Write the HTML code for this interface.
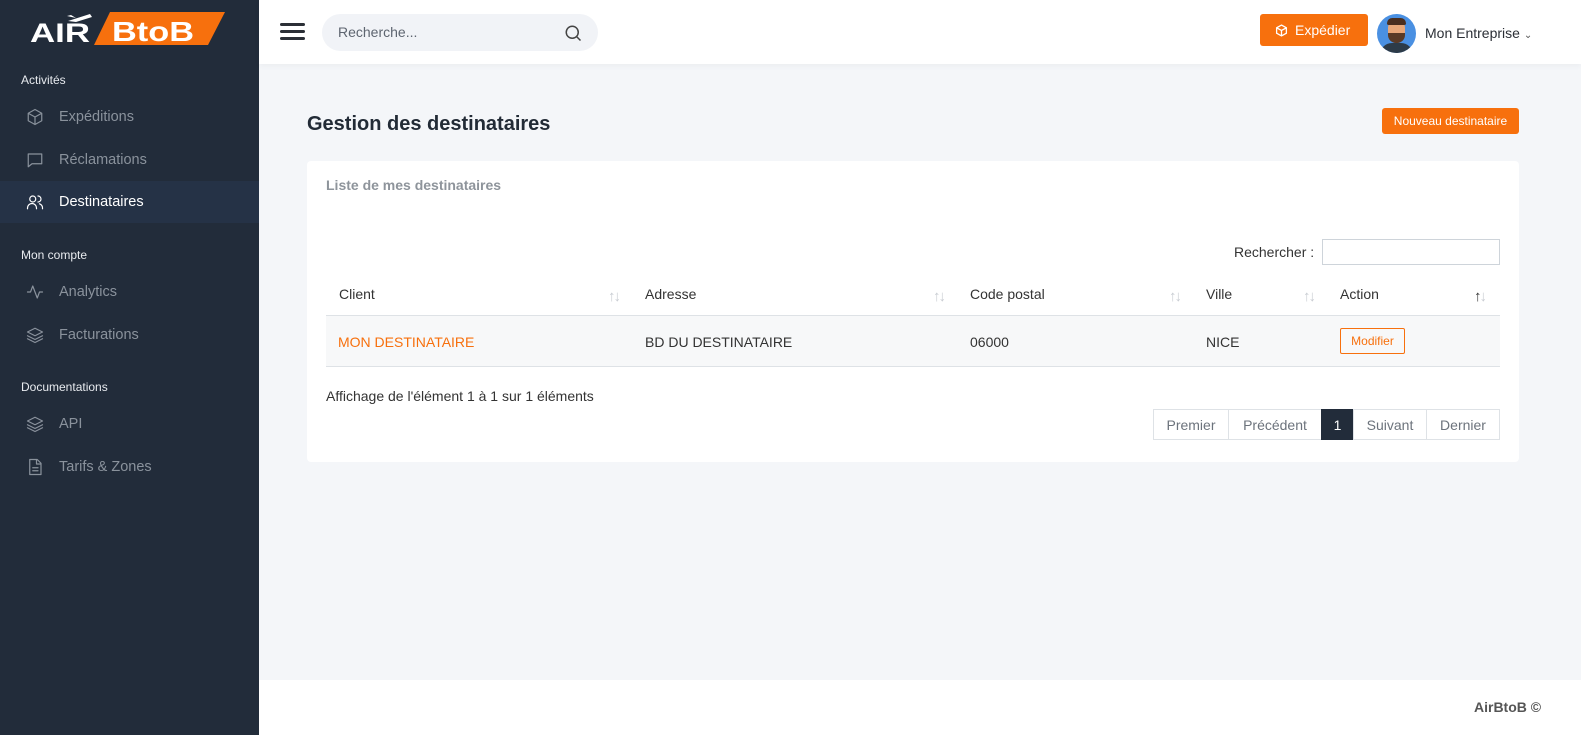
<!DOCTYPE html>
<html><head><meta charset="utf-8"><style>
*{box-sizing:border-box;margin:0;padding:0}
body{width:1581px;height:735px;overflow:hidden;font-family:"Liberation Sans",sans-serif;background:#f4f6f9;position:relative;color:#2b2f36}
.sb{position:absolute;left:0;top:0;width:259px;height:735px;background:#222c3a}
.sec{position:absolute;left:21px;font-size:12px;color:#e8ebef}
.it{position:absolute;left:0;width:259px;height:42px;display:flex;align-items:center;padding-left:26px;font-size:14.5px;color:#8a929c}
.it svg{width:18px;height:18px;margin-right:15px;stroke:#8a929c;fill:none;stroke-width:1.6;stroke-linecap:round;stroke-linejoin:round}
.it.act{background:#253246;color:#fff}
.it.act svg{stroke:#fff}
.hd{position:absolute;left:259px;top:0;right:0;height:64px;background:#fff;box-shadow:0 2px 6px rgba(0,0,0,.04)}
.srch{position:absolute;left:63px;top:14px;width:276px;height:37px;border-radius:19px;background:#f1f3f7;font-size:14px;color:#5e6570;padding:10px 16px}
.btn{background:#f7700d;color:#fff;border-radius:3px}
.card{position:absolute;left:307px;top:161px;width:1212px;height:301px;background:#fff;border-radius:4px}
.arr{position:absolute;font-size:15px;color:#c8ccd2;letter-spacing:-2px}
.pg{position:absolute;top:409px;height:31px;border:1px solid #dee2e6;font-size:14px;color:#6c737c;display:flex;align-items:center;justify-content:center}
</style></head><body>
<div class="sb">
 <svg style="position:absolute;left:28px;top:8px" width="200" height="40" viewBox="0 0 200 40">
   <path d="M40 13 L62 6 L64 9 L48 14 Z M48 10 L43 7 L39 8 Z" fill="#fff"/>
   <text x="2" y="34" font-family="Liberation Sans" font-weight="bold" font-size="27" fill="#fff" textLength="60" lengthAdjust="spacingAndGlyphs">AIR</text>
   <path d="M82 4 H197 L180 37 H66 Z" fill="#f7700d"/>
   <text x="84" y="33" font-family="Liberation Sans" font-weight="bold" font-size="28" fill="#fff" textLength="82" lengthAdjust="spacingAndGlyphs">BtoB</text>
 </svg>
 <div class="sec" style="top:73px">Activités</div>
 <div class="it" style="top:96px"><svg viewBox="0 0 24 24"><path d="M12 2l9 5v10l-9 5-9-5V7z M3 7l9 5 9-5 M12 12v10"/></svg>Expéditions</div>
 <div class="it" style="top:139px"><svg viewBox="0 0 24 24"><path d="M3 4h18v13H8l-5 4z"/></svg>Réclamations</div>
 <div class="it act" style="top:181px"><svg viewBox="0 0 24 24"><circle cx="9" cy="8" r="4"/><path d="M2 21v-1a6 6 0 0 1 12 0v1 M16 4a4 4 0 0 1 0 8 M22 21v-1a6 6 0 0 0-4-5.6"/></svg>Destinataires</div>
 <div class="sec" style="top:248px">Mon compte</div>
 <div class="it" style="top:271px"><svg viewBox="0 0 24 24"><path d="M2 12h4l3-8 6 16 3-8h4"/></svg>Analytics</div>
 <div class="it" style="top:314px"><svg viewBox="0 0 24 24"><path d="M12 3l10 5-10 5L2 8z M2 13l10 5 10-5 M2 17l10 5 10-5"/></svg>Facturations</div>
 <div class="sec" style="top:380px">Documentations</div>
 <div class="it" style="top:403px"><svg viewBox="0 0 24 24"><path d="M12 3l10 5-10 5L2 8z M2 13l10 5 10-5 M2 17l10 5 10-5"/></svg>API</div>
 <div class="it" style="top:446px"><svg viewBox="0 0 24 24"><path d="M5 2h10l5 5v15H5z M14 2v6h6 M9 13h7 M9 17h7"/></svg>Tarifs &amp; Zones</div>
</div>
<div class="hd">
 <div style="position:absolute;left:21px;top:23px;width:25px;height:3px;background:#2b2f36;border-radius:2px;box-shadow:0 7px 0 #2b2f36,0 14px 0 #2b2f36"></div>
 <div class="srch">Recherche...
  <svg style="position:absolute;right:16px;top:10px" width="18" height="18" viewBox="0 0 24 24" fill="none" stroke="#444" stroke-width="2"><circle cx="11" cy="11" r="8"/><path d="M17 17l5 5"/></svg></div>
 <div class="btn" style="position:absolute;left:1001px;top:14px;width:108px;height:32px;font-size:14px;padding:8px 0 0 35px">
  <svg style="position:absolute;left:15px;top:10px" width="13" height="13" viewBox="0 0 24 24" fill="none" stroke="#fff" stroke-width="2.4"><path d="M12 2l9 5v10l-9 5-9-5V7z M3 7l9 5 9-5 M12 12v10"/></svg>Expédier</div>
 <div style="position:absolute;left:1118px;top:14px;width:39px;height:39px;border-radius:50%;background:#4a90e2;overflow:hidden">
  <div style="position:absolute;left:11px;top:6px;width:17px;height:22px;background:#e9a87a;border-radius:8px"></div>
  <div style="position:absolute;left:10px;top:4px;width:19px;height:7px;background:#4a2e1f;border-radius:6px 6px 2px 2px"></div>
  <div style="position:absolute;left:11px;top:19px;width:17px;height:10px;background:#5a3a26;border-radius:0 0 8px 8px"></div>
  <div style="position:absolute;left:3px;top:29px;width:33px;height:14px;background:#2d3b48;border-radius:12px 12px 0 0"></div>
 </div>
 <div style="position:absolute;left:1166px;top:25px;font-size:14px;color:#2b2f36">Mon Entreprise <span style="font-size:10px;color:#555">&#8964;</span></div>
</div>
<div style="position:absolute;left:307px;top:113px;font-size:20px;font-weight:bold;color:#222b36">Gestion des destinataires</div>
<div class="btn" style="position:absolute;left:1382px;top:108px;width:137px;height:26px;font-size:12px;text-align:center;line-height:26px">Nouveau destinataire</div>
<div class="card">
 <div style="position:absolute;left:19px;top:16px;font-size:14px;font-weight:bold;color:#8e949b">Liste de mes destinataires</div>
 <div style="position:absolute;left:927px;top:83px;font-size:14px;color:#333">Rechercher :</div>
 <div style="position:absolute;left:1015px;top:78px;width:178px;height:26px;border:1px solid #ced4da"></div>
 <div style="position:absolute;left:19px;top:154px;width:1174px;height:1px;background:#dee2e6"></div>
 <div style="position:absolute;left:19px;top:155px;width:1174px;height:51px;background:#f7f8f9;border-bottom:1px solid #dee2e6"></div>
 <div style="position:absolute;top:125px;left:32px;font-size:14px;color:#333">Client</div>
 <div style="position:absolute;top:125px;left:338px;font-size:14px;color:#333">Adresse</div>
 <div style="position:absolute;top:125px;left:663px;font-size:14px;color:#333">Code postal</div>
 <div style="position:absolute;top:125px;left:899px;font-size:14px;color:#333">Ville</div>
 <div style="position:absolute;top:125px;left:1033px;font-size:14px;color:#333">Action</div>
 <div class="arr" style="left:301px;top:127px">↑↓</div>
 <div class="arr" style="left:626px;top:127px">↑↓</div>
 <div class="arr" style="left:862px;top:127px">↑↓</div>
 <div class="arr" style="left:996px;top:127px">↑↓</div>
 <div class="arr" style="left:1167px;top:127px"><span style="color:#333">↑</span>↓</div>
 <div style="position:absolute;top:173px;left:31px;font-size:14px;color:#f7700d">MON DESTINATAIRE</div>
 <div style="position:absolute;top:173px;left:338px;font-size:14px;color:#333">BD DU DESTINATAIRE</div>
 <div style="position:absolute;top:173px;left:663px;font-size:14px;color:#333">06000</div>
 <div style="position:absolute;top:173px;left:899px;font-size:14px;color:#333">NICE</div>
 <div style="position:absolute;top:167px;left:1033px;width:65px;height:26px;border:1px solid #f7700d;border-radius:2px;color:#f7700d;font-size:12px;text-align:center;line-height:24px">Modifier</div>
 <div style="position:absolute;top:227px;left:19px;font-size:14px;color:#333">Affichage de l'élément 1 à 1 sur 1 éléments</div>
</div>
<div class="pg" style="left:1153px;width:76px">Premier</div>
<div class="pg" style="left:1228px;width:94px">Précédent</div>
<div class="pg" style="left:1321px;width:33px;background:#222c3a;color:#fff;border-color:#222c3a">1</div>
<div class="pg" style="left:1353px;width:74px">Suivant</div>
<div class="pg" style="left:1426px;width:74px">Dernier</div>
<div style="position:absolute;left:259px;top:680px;width:1322px;height:55px;background:#fff"></div>
<div style="position:absolute;left:1474px;top:699px;font-size:14px;font-weight:bold;color:#555">AirBtoB ©</div>
</body></html>
